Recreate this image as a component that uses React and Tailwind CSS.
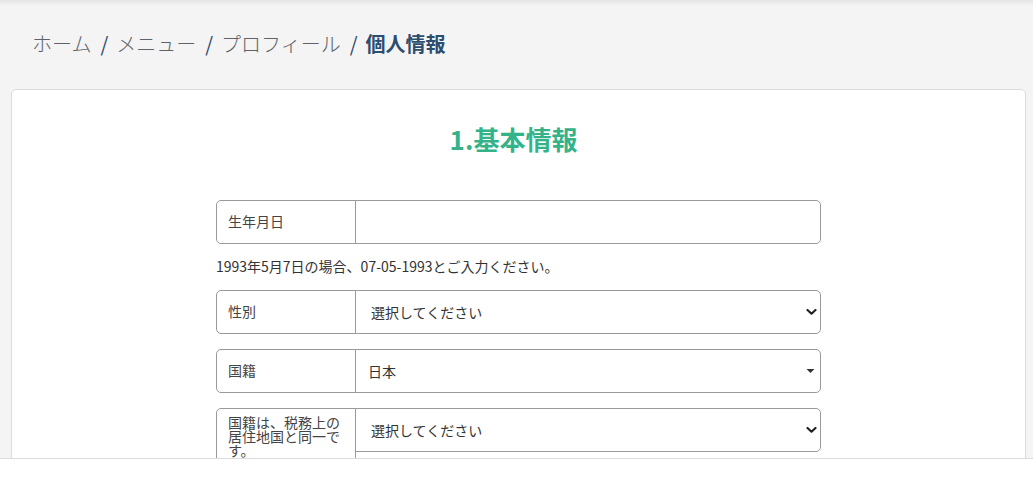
import React from "react";

const font = { fontFamily: '"Noto Sans CJK JP", "Noto Sans", sans-serif' };

function Chevron() {
  return (
    <svg width="11" height="7" viewBox="0 0 11 7" className="pointer-events-none absolute right-[4px] top-1/2 -translate-y-1/2">
      <path d="M1.5 1.5 L5.5 5.2 L9.5 1.5" fill="none" stroke="#222" strokeWidth="2.2" strokeLinecap="round" strokeLinejoin="round" />
    </svg>
  );
}

function Caret() {
  return (
    <svg width="9" height="5" viewBox="0 0 9 5" className="pointer-events-none absolute right-[6px] top-1/2 -translate-y-1/2">
      <path d="M0.5 0.5 L8.5 0.5 L4.5 4.5 Z" fill="#333" />
    </svg>
  );
}

function Row({ label, children, multi }) {
  return (
    <div className="flex items-start">
      <div
        className={
          multi
            ? "w-[140px] shrink-0 border border-[#999] rounded-l-[5px] px-[11px] pt-[6px] pb-[6px] text-[14px] leading-[14px] text-[#444] min-h-[60px]"
            : "w-[140px] shrink-0 h-[44px] border border-[#999] rounded-l-[5px] px-[11px] pt-[10px] text-[14px] leading-[20px] text-[#444]"
        }
      >
        {label}
      </div>
      <div className="relative -ml-px flex-1 h-[44px]">{children}</div>
    </div>
  );
}

export default function App() {
  return (
    <div style={font} className="min-h-[489px] bg-[#f4f4f4] relative">
      <div className="h-[6px] bg-gradient-to-b from-[#e4e4e4] to-[#f4f4f4]" />
      <nav className="pl-[32px] pt-[24px] pb-[31px] text-[20px] leading-[28px] flex items-center">
        <span className="text-[#5f6368] font-light">ホーム</span>
        <span className="ml-[9px] mr-[8px] text-[#2c4a6a]">/</span>
        <span className="text-[#5f6368] font-light">メニュー</span>
        <span className="ml-[9px] mr-[8px] text-[#2c4a6a]">/</span>
        <span className="text-[#5f6368] font-light">プロフィール</span>
        <span className="ml-[9px] mr-[8px] text-[#2c4a6a]">/</span>
        <span className="text-[#2c4d6e] font-bold">個人情報</span>
      </nav>
      <div className="ml-[11px] mr-[7px] bg-white border border-[#dcdcdc] rounded-t-[5px] pt-[31px] pb-[80px]">
        <h1 className="text-center text-[26px] leading-[36px] font-bold text-[#34b38a] pr-[10px]">1.基本情報</h1>
        <div className="mx-auto w-[605px] mt-[43px]">
          <Row label="生年月日">
            <input className="w-full h-full border border-[#999] rounded-r-[5px] outline-none px-[12px]" />
          </Row>
          <p className="mt-[12px] mb-[14px] text-[14px] leading-[20px] text-[#333]">
            1993年5月7日の場合、07-05-1993とご入力ください。
          </p>
          <Row label="性別">
            <div className="w-full h-full border border-[#999] rounded-r-[5px] pl-[15px] flex items-center text-[14px] text-[#333]">
              選択してください
            </div>
            <Chevron />
          </Row>
          <div className="h-[15px]" />
          <Row label="国籍">
            <div className="w-full h-full border border-[#999] rounded-r-[5px] pl-[12px] flex items-center text-[14px] text-[#333]">
              日本
            </div>
            <Caret />
          </Row>
          <div className="h-[15px]" />
          <Row label="国籍は、税務上の居住地国と同一です。" multi>
            <div className="w-full h-full border border-[#999] rounded-r-[5px] pl-[15px] flex items-center text-[14px] text-[#333]">
              選択してください
            </div>
            <Chevron />
          </Row>
        </div>
      </div>
      <div className="fixed bottom-0 left-0 right-0 h-[31px] bg-white border-t border-[#dcdcdc]" />
    </div>
  );
}
